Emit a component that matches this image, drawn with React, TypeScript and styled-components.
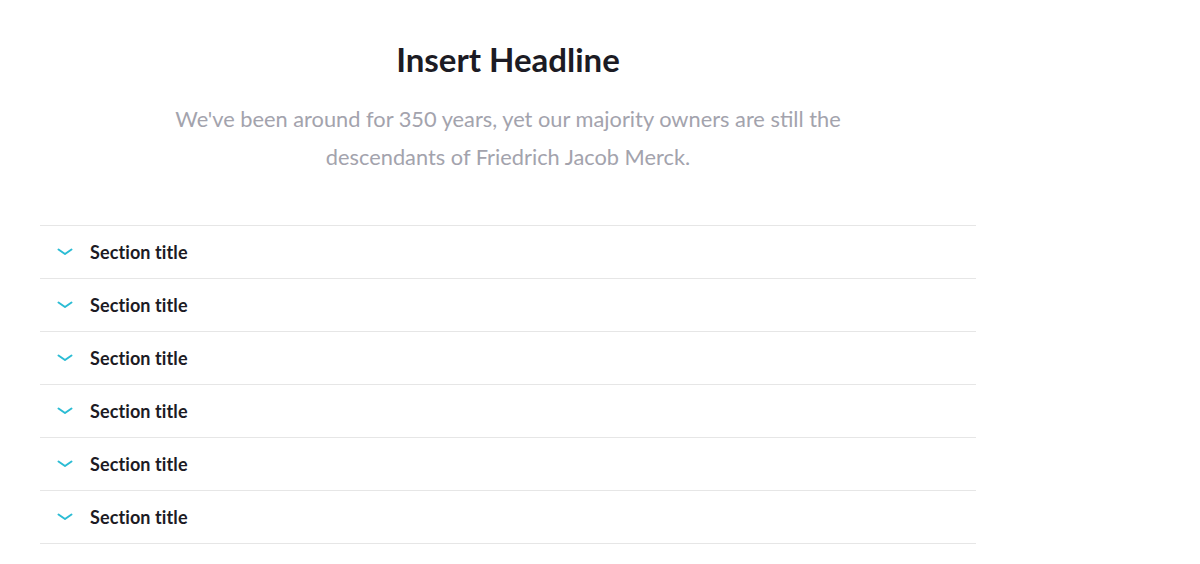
import React from "react";
import styled, { createGlobalStyle } from "styled-components";

const Global = createGlobalStyle`
  html, body { margin: 0; padding: 0; background: #fff; }
  body { font-family: Lato, "Open Sans", sans-serif; }
`;

const Page = styled.div`
  width: 936px;
  padding: 39px 0 0 40px;
`;

const Header = styled.header`
  display: flex;
  flex-direction: column;
  align-items: center;
  text-align: center;
  margin-bottom: 49px;
`;

const Headline = styled.h1`
  margin: 0;
  font-size: 33px;
  line-height: 40px;
  font-weight: 700;
  color: #1c1b24;
`;

const Lead = styled.p`
  margin: 21px 0 0;
  max-width: 720px;
  font-size: 21.8px;
  line-height: 38px;
  color: #a3a3ad;
`;

const List = styled.div`
  border-top: 1px solid #e6e6e6;
`;

const Row = styled.div`
  display: flex;
  align-items: center;
  height: 52px;
  border-bottom: 1px solid #e6e6e6;
  padding-left: 17px;
  gap: 17px;
`;

const Title = styled.span`
  font-size: 18px;
  font-weight: 700;
  letter-spacing: 0.1px;
  color: #1c1b24;
`;

const Chevron = () => (
  <svg width="16" height="8" viewBox="0 0 16 8" fill="none">
    <path d="M1.5 1.5 L8 6 L14.5 1.5" stroke="#2bbcd4" strokeWidth="2" strokeLinecap="round" strokeLinejoin="round" />
  </svg>
);

export default function App() {
  return (
    <Page>
      <Global />
      <Header>
        <Headline>Insert Headline</Headline>
        <Lead>
          We've been around for 350 years, yet our majority owners are still the descendants of Friedrich Jacob Merck.
        </Lead>
      </Header>
      <List>
        {Array.from({ length: 6 }).map((_, i) => (
          <Row key={i}>
            <Chevron />
            <Title>Section title</Title>
          </Row>
        ))}
      </List>
    </Page>
  );
}
